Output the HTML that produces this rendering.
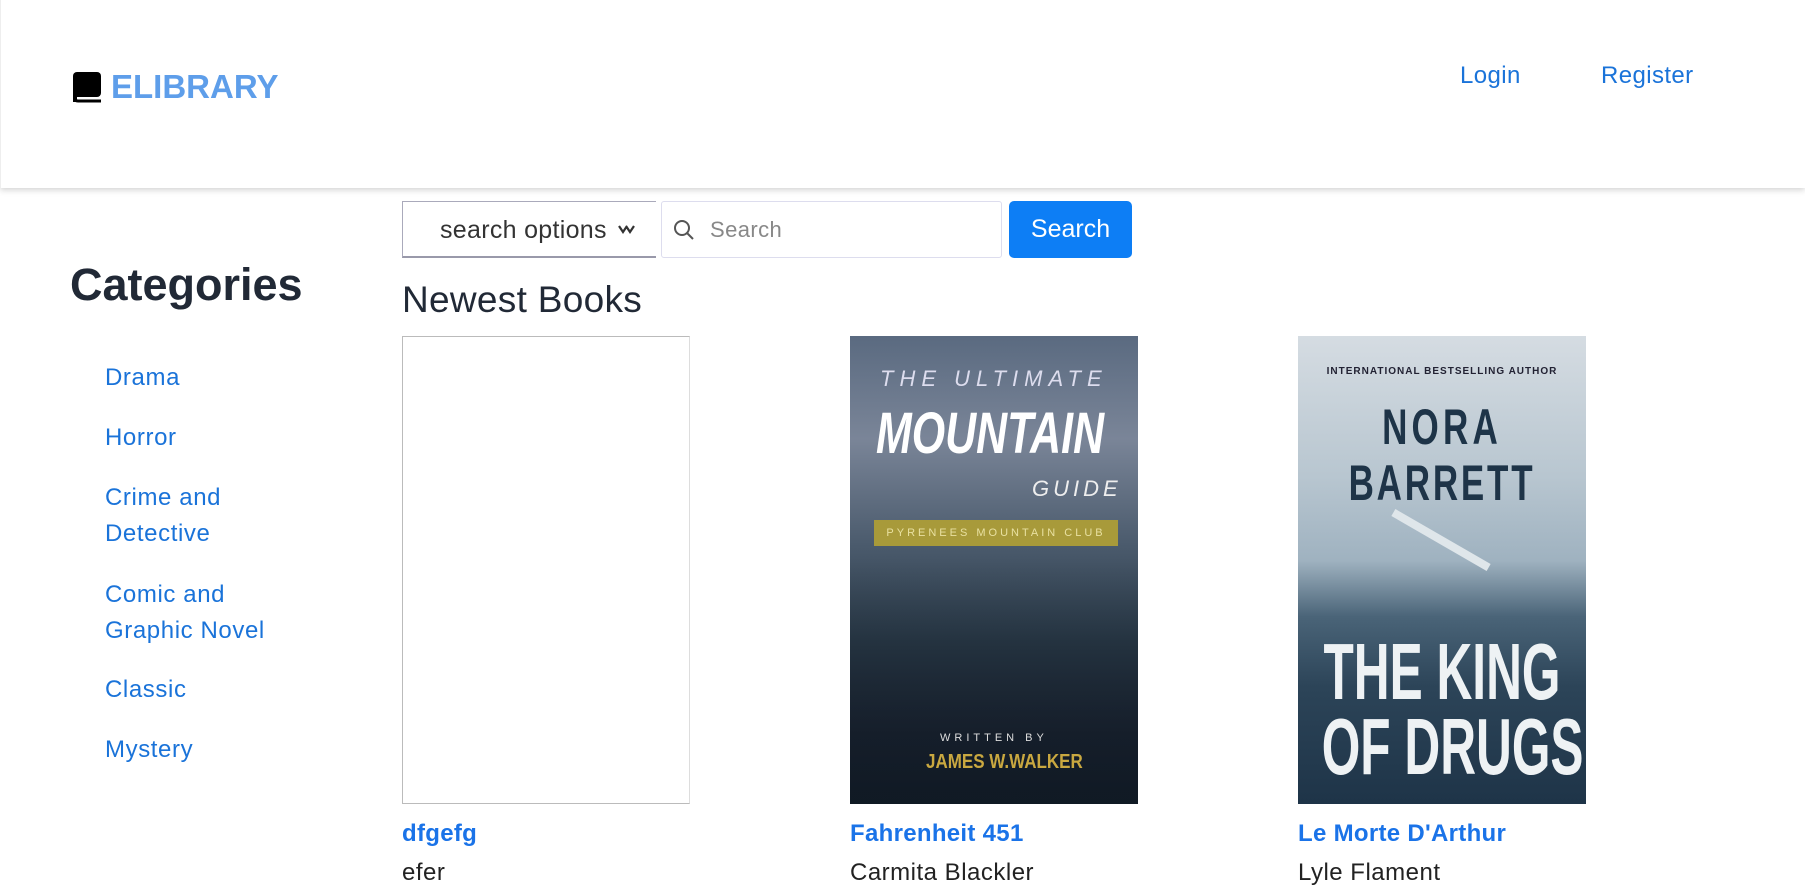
<!DOCTYPE html>
<html><head><meta charset="utf-8">
<style>
*{margin:0;padding:0;box-sizing:border-box}
body{width:1805px;height:894px;overflow:hidden;background:#fff;font-family:"Liberation Sans",sans-serif;position:relative}
.hdr{position:absolute;left:0;top:0;width:1805px;height:188px;background:#fff;box-shadow:0 2px 6px rgba(0,0,0,.18);border-left:1px solid #eee}
.abs{position:absolute;white-space:nowrap}
.logo{left:111px;top:68px;font-size:33px;font-weight:bold;color:#5e9eea}
.nav{font-size:24px;color:#1a73d9;top:62px;letter-spacing:.4px}
.cat{left:105px;font-size:24px;color:#1a73d9;line-height:36px;letter-spacing:.6px}
.card{position:absolute;top:336px;width:288px;height:468px}
.t{font-size:24px;font-weight:bold;color:#1a73e8;top:820px;letter-spacing:.3px}
.a{font-size:24px;color:#222;top:859px;letter-spacing:.5px}
.ct{position:absolute;left:-50px;width:388px;text-align:center;white-space:nowrap}
</style></head><body>
<div class="hdr"></div>
<svg class="abs" style="left:72px;top:72px" width="30" height="31" viewBox="0 0 30 31"><rect x="1" y="0" width="28" height="25" rx="4" fill="#000"/><rect x="1" y="10" width="4" height="20" fill="#000"/><path d="M3 26 Q3 29 6 29 H29" stroke="#000" stroke-width="3" fill="none"/></svg>
<div class="abs logo">ELIBRARY</div>
<div class="abs nav" style="left:1460px">Login</div>
<div class="abs nav" style="left:1601px">Register</div>

<div class="abs" style="left:402px;top:201px;width:254px;height:57px;border:1px solid #aab;border-right:none;border-bottom:2px solid #99a"></div>
<div class="abs" style="left:440px;top:216px;font-size:25px;color:#333;letter-spacing:.3px">search options</div>
<svg class="abs" style="left:618px;top:224px" width="18" height="12" viewBox="0 0 18 12"><path d="M1 2 L5 8 L9 2 M8 2 L12 8 L16 2" stroke="#333" stroke-width="2.2" fill="none"/></svg>
<div class="abs" style="left:661px;top:201px;width:341px;height:57px;border:1px solid #dde;border-radius:3px"></div>
<svg class="abs" style="left:673px;top:219px" width="22" height="22" viewBox="0 0 22 22"><circle cx="9" cy="9" r="7" stroke="#555" stroke-width="2" fill="none"/><path d="M14 14 L20 20" stroke="#555" stroke-width="2"/></svg>
<div class="abs" style="left:710px;top:217px;font-size:22px;color:#888;letter-spacing:.4px">Search</div>
<div class="abs" style="left:1009px;top:201px;width:123px;height:57px;background:#0d7ef5;border-radius:5px;color:#fff;font-size:25px;text-align:center;line-height:57px">Search</div>

<div class="abs" style="left:70px;top:259px;font-size:45px;font-weight:bold;color:#212936">Categories</div>
<div class="abs" style="left:402px;top:279px;font-size:37px;color:#212936;letter-spacing:.3px">Newest Books</div>

<div class="abs cat" style="top:360px">Drama</div>
<div class="abs cat" style="top:420px">Horror</div>
<div class="abs cat" style="top:480px">Crime and<br>Detective</div>
<div class="abs cat" style="top:577px">Comic and<br>Graphic Novel</div>
<div class="abs cat" style="top:672px">Classic</div>
<div class="abs cat" style="top:732px">Mystery</div>

<div class="card" style="left:402px;border:1px solid #bbb;border-right-color:#ddd"></div>
<div class="card" style="left:850px;background:linear-gradient(180deg,#5a6a80 0%,#7a8598 22%,#4a5a6c 45%,#2a3a48 65%,#1a2230 85%,#121a26 100%);overflow:hidden">
 <div style="position:absolute;left:30px;top:30px;font-size:22px;color:#dde;letter-spacing:6px;font-style:italic">THE ULTIMATE</div>
 <div style="position:absolute;left:26px;top:64px;font-size:58px;font-weight:bold;color:#fff;font-style:italic;transform:scaleX(.74);transform-origin:left;white-space:nowrap">MOUNTAIN</div>
 <div style="position:absolute;left:182px;top:140px;font-size:22px;color:#eee;letter-spacing:4px;font-style:italic">GUIDE</div>
 <div style="position:absolute;left:24px;top:184px;width:244px;height:26px;background:#a89a3a;color:#e8e0a0;font-size:11px;letter-spacing:3px;text-align:center;line-height:26px">PYRENEES MOUNTAIN CLUB</div>
 <div style="position:absolute;left:0;top:220px;width:288px;height:248px;background:linear-gradient(180deg,rgba(30,45,55,0) 0%,rgba(15,25,35,.6) 100%)"></div>
 <div style="position:absolute;left:90px;top:396px;font-size:11px;color:#ddd;letter-spacing:4px">WRITTEN BY</div>
 <div style="position:absolute;left:76px;top:415px;font-size:20px;color:#c9a840;font-weight:bold;transform:scaleX(.85);transform-origin:left;white-space:nowrap">JAMES W.WALKER</div>
</div>
<div class="card" style="left:1298px;background:linear-gradient(180deg,#d5dce2 0%,#b8c6d0 30%,#9fb2c0 48%,#4a6478 60%,#2c4458 75%,#1e3448 100%);overflow:hidden">
 <div class="ct" style="top:30px;font-size:10px;font-weight:bold;color:#223;letter-spacing:1px">INTERNATIONAL BESTSELLING AUTHOR</div>
 <div class="ct" style="top:62px;font-size:50px;color:#1e3448;letter-spacing:6px;font-weight:bold;transform:scaleX(.7)">NORA</div>
 <div class="ct" style="top:118px;font-size:50px;color:#1e3448;letter-spacing:4px;font-weight:bold;transform:scaleX(.7)">BARRETT</div>
 <div style="position:absolute;left:88px;top:200px;width:110px;height:8px;background:#dfe6ea;transform:rotate(30deg)"></div>
 <div class="ct" style="top:290px;font-size:80px;font-weight:bold;color:#eef2f4;transform:scaleX(.62)">THE KING</div>
 <div class="ct" style="top:365px;font-size:80px;font-weight:bold;color:#eef2f4;transform:scaleX(.62)">OF DRUGS</div>
</div>

<div class="abs t" style="left:402px">dfgefg</div>
<div class="abs a" style="left:402px">efer</div>
<div class="abs t" style="left:850px">Fahrenheit 451</div>
<div class="abs a" style="left:850px">Carmita Blackler</div>
<div class="abs t" style="left:1298px">Le Morte D'Arthur</div>
<div class="abs a" style="left:1298px">Lyle Flament</div>
</body></html>
